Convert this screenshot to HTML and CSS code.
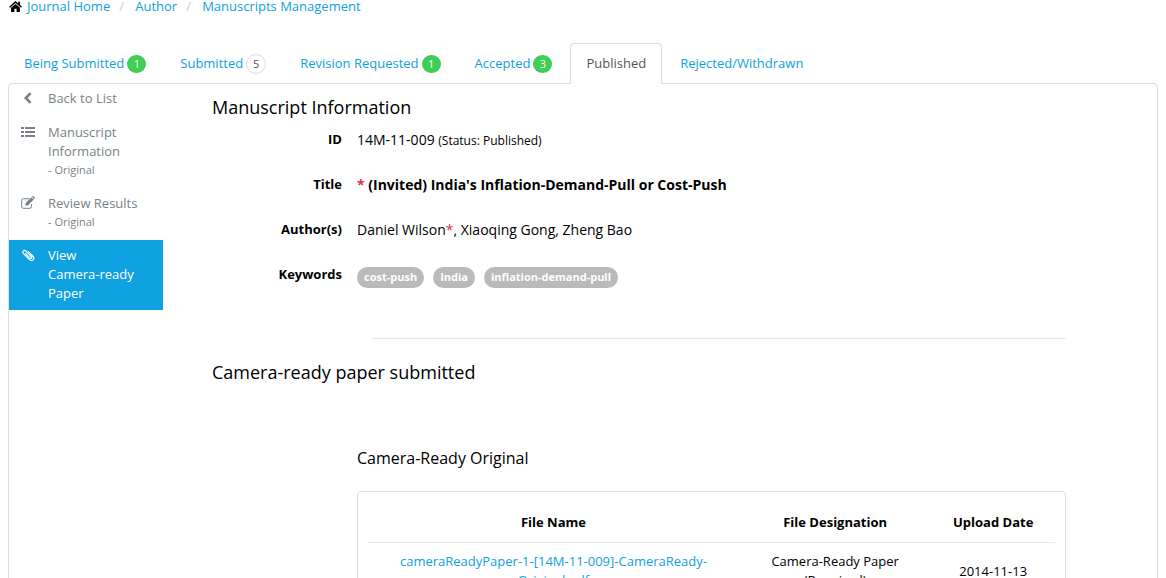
FILE: index.html
```html
<!DOCTYPE html>
<html lang="en">
<head>
<meta charset="utf-8">
<title>Manuscripts Management</title>
<link rel="stylesheet" href="styles.css">
</head>
<body>
<nav class="breadcrumb" aria-label="Breadcrumb">
  <svg class="home" viewBox="0 0 14 12" aria-hidden="true"><path d="M7 0 0 6.200l1 1.100 6-5.200 6 5.200 1-1.100-2-1.800V.9h-2v1.700z"/><path d="M7 3.200 2.200 7.300V12h3.600V8.500h2.400V12h3.600V7.300z"/></svg>
  <a href="#">Journal Home</a><span class="slash">/</span>
  <a href="#">Author</a><span class="slash">/</span>
  <a href="#">Manuscripts Management</a>
</nav>

<nav class="tabs" aria-label="Manuscript status">
  <a class="tab" href="#">Being Submitted <span class="badge">1</span></a>
  <a class="tab" href="#">Submitted <span class="badge plain">5</span></a>
  <a class="tab" href="#">Revision Requested <span class="badge">1</span></a>
  <a class="tab" href="#">Accepted <span class="badge">3</span></a>
  <a class="tab active" href="#" aria-current="page">Published</a>
  <a class="tab" href="#">Rejected/Withdrawn</a>
</nav>

<div class="panel">
  <aside class="sidebar">
    <a class="item" href="#">
      <svg class="icon" viewBox="0 0 14 14" aria-hidden="true"><path d="M9.600 2.200 4.800 7l4.800 4.800" fill="none" stroke="currentColor" stroke-width="2.600"/></svg>
      <span>Back to List</span>
    </a>
    <a class="item" href="#">
      <svg class="icon" viewBox="0 0 14 14" aria-hidden="true"><path d="M0 2h3v2H0zM4 2h10v2H4zM0 6h3v2H0zM4 6h10v2H4zM0 10h3v2H0zM4 10h10v2H4z"/></svg>
      <span>Manuscript Information<small>- Original</small></span>
    </a>
    <a class="item" href="#">
      <svg class="icon" viewBox="0 0 14 14" aria-hidden="true"><path d="M10.500 8v2.500a1.800 1.800 0 0 1-1.800 1.800H2.500a1.800 1.800 0 0 1-1.800-1.800v-6a1.800 1.800 0 0 1 1.800-1.800H8.500" fill="none" stroke="currentColor"/><path d="M4.500 9.500V7.200l6-6 2.300 2.300-6 6zM11 .8l.6-.5q.5-.4 1 0l1.100 1.100q.5.500 0 1l-.5.600z"/></svg>
      <span>Review Results<small>- Original</small></span>
    </a>
    <a class="item active" href="#" aria-current="page">
      <svg class="icon" viewBox="0 0 14 14" aria-hidden="true"><path d="M4.300 5.200 8.800 10q1 .9 1.700.2t-.2-1.700L5 3.200Q3.500 1.800 2.300 2.900T2.600 5.700l5.600 5.700q2.200 2 3.900.5t-.3-3.900L7.200 3.300" fill="none" stroke="currentColor" stroke-width="1.200"/></svg>
      <span>View <span class="together">Camera-ready</span> Paper</span>
    </a>
  </aside>

  <main class="main">
    <h2>Manuscript Information</h2>
    <dl class="info">
      <dt>ID</dt><dd>14M-11-009 <span class="status">(Status: Published)</span></dd>
      <dt>Title</dt><dd class="title"><span class="star">*</span> (Invited) India's Inflation-Demand-Pull or Cost-Push</dd>
      <dt>Author(s)</dt><dd>Daniel Wilson<span class="star">*</span>, Xiaoqing Gong, Zheng Bao</dd>
      <dt>Keywords</dt><dd class="keywords"><span>cost-push</span><span>India</span><span>inflation-demand-pull</span></dd>
    </dl>
    <hr>
    <h2>Camera-ready paper submitted</h2>
    <section class="files">
      <h3>Camera-Ready Original</h3>
      <div class="card">
        <table>
          <thead><tr><th class="name">File Name</th><th class="kind">File Designation</th><th class="date">Upload Date</th></tr></thead>
          <tbody><tr>
            <td><a href="#">cameraReadyPaper-1-[14M-11-009]-CameraReady-Original.pdf</a></td>
            <td>Camera-Ready Paper<br>(Required)</td>
            <td>2014-11-13</td>
          </tr></tbody>
        </table>
      </div>
    </section>
  </main>
</div>
</body>
</html>
```
FILE: styles.css
```css
* { box-sizing: border-box; }
html { overflow: hidden; }
body {
  margin: 0;
  padding: 0 8px;
  background: #fff;
  color: #000;
  font: 13px/19px "Open Sans", sans-serif;
}
a { color: #0fa1e0; text-decoration: none; }
h2, h3 { margin: 0; font-weight: 400; }
h2 { font-size: 18px; line-height: 24px; }
h3 { font-size: 16px; line-height: 22px; }

.breadcrumb { display: flex; align-items: center; height: 13px; padding-left: 1px; line-height: 13px; }
.home { width: 13px; height: 11px; margin-right: 5px; }
.slash { width: 25px; padding-left: 9px; color: #ccc; }

.tabs { display: flex; gap: 2px; margin-top: 30px; }
.tab {
  display: flex;
  align-items: center;
  gap: 3px;
  height: 41px;
  padding: 0 15px;
  border: 1px solid transparent;
  border-radius: 4px 4px 0 0;
}
.tab.active {
  z-index: 1;
  border-color: #ddd;
  border-bottom-color: #fff;
  background: #fff;
  color: #555;
}
.badge {
  width: 19px;
  height: 18px;
  border-radius: 9px;
  background: #3fcf57;
  color: #fff;
  font-size: 11px;
  line-height: 18px;
  text-align: center;
}
.badge.plain {
  width: 20px;
  height: 20px;
  border: 1px solid #ddd;
  border-radius: 10px;
  background: #fff;
  color: #555;
}

.panel {
  display: flex;
  align-items: flex-start;
  margin-top: -1px;
  border: 1px solid #ddd;
  border-radius: 4px;
}
.sidebar { flex: 0 0 154px; margin-top: -1px; }
.item {
  display: flex;
  gap: 13px;
  padding: 6px 20px 9px 12px;
  color: #788288;
}
.item.active { padding-bottom: 7px; background: #0fa1e0; color: #fff; }
.icon { flex: none; width: 14px; height: 14px; margin-top: 2px; fill: currentColor; }
.item small { display: block; font-size: 11px; line-height: 18px; }
.together { white-space: nowrap; }

.main { flex: 1; padding: 11px 91px 40px 49px; }
.info {
  display: grid;
  grid-template-columns: 130px 1fr;
  column-gap: 15px;
  row-gap: 26px;
  margin: 11px 0 0;
}
dt { font-weight: 700; text-align: right; }
dd { margin: 0; font-size: 14px; }
.status { font-size: 12px; line-height: 12px; }
.title { font-weight: 700; }
.star { color: #e33244; }
.keywords { display: flex; gap: 9px; margin-top: 2px; }
.keywords span {
  height: 21px;
  padding: 0 7px;
  border-radius: 11px;
  background: #bababa;
  color: #fff;
  font-size: 11px;
  font-weight: 700;
  line-height: 20px;
}
hr { margin: 50px 0 21px 160px; border: 0; border-top: 1px solid #e8e8e8; }
.files { margin: 63px 0 0 145px; }
.card { margin-top: 22px; padding: 10px; border: 1px solid #ddd; border-radius: 4px; }
table { width: 100%; border-collapse: collapse; table-layout: fixed; }
th, td { padding: 10px; text-align: center; vertical-align: middle; }
th { padding-top: 11px; border-bottom: 1px solid #e8e8e8; }
td { padding-top: 9px; }
.name { width: 54%; }
.kind { width: 28%; }
.date { width: 18%; }
```
